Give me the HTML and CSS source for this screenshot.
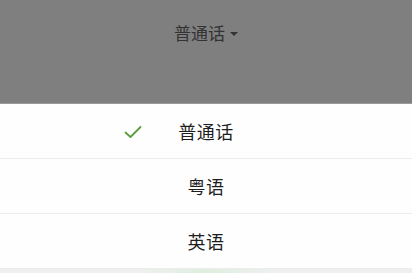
FILE: index.html
```html
<!DOCTYPE html>
<html lang="zh">
<head>
  <meta charset="UTF-8" />
  <meta name="viewport" content="width=device-width, initial-scale=1.0" />
  <title>语言选择</title>
  <link rel="stylesheet" href="styles.css">
</head>
<body>

<div class="top-bar">
  <div class="current-lang">普通话 <span class="caret"></span></div>
</div>

<div class="sheet">
  <div class="option selected">
    <span class="check">
      <svg width="18" height="14" viewBox="0 0 18 14"><path d="M1.5 7.5 L6.5 12 L16.5 2" fill="none" stroke="#5a9e3c" stroke-width="1.8" stroke-linecap="round" stroke-linejoin="round"/></svg>
    </span>
    <span class="label">普通话</span>
  </div>
  <div class="option"><span class="label">粤语</span></div>
  <div class="option"><span class="label">英语</span></div>
  <div class="bottom-strip"></div>
</div>

</body>
</html>
```

FILE: styles.css
```css
body {
  font-family: "Noto Sans CJK SC", "Noto Sans", sans-serif;
  margin: 0;
  padding: 0;
  background-color: #808080;
  color: #222;
}

.top-bar {
  height: 103px;
  background-color: #7f7f7f;
  display: flex;
  justify-content: center;
  align-items: flex-start;
  padding-top: 20px;
  box-sizing: border-box;
}

.current-lang {
  font-size: 17px;
  line-height: 26px;
  color: #333;
  display: flex;
  align-items: center;
  gap: 5px;
}

.caret {
  width: 0;
  height: 0;
  border-left: 4px solid transparent;
  border-right: 4px solid transparent;
  border-top: 4px solid #333;
  margin-top: 1px;
}

.sheet {
  background-color: #fff;
  border-top: 1px solid #9a9a9a;
}

.option {
  display: grid;
  grid-template-columns: 1fr auto 1fr;
  align-items: center;
  height: 54px;
  border-bottom: 1px solid #ececec;
  background-color: #fefefe;
}

.option .label {
  grid-column: 2;
  font-size: 18px;
  color: #1e1e1e;
  letter-spacing: 0.5px;
}

.check {
  grid-column: 1;
  grid-row: 1;
  justify-self: end;
  margin-right: 36px;
  display: flex;
  margin-top: 2px;
}

.bottom-strip {
  height: 8px;
  background: linear-gradient(to right, #eef0ee 35%, #dfeee0 50%, #eef0ee 65%);
}
```
